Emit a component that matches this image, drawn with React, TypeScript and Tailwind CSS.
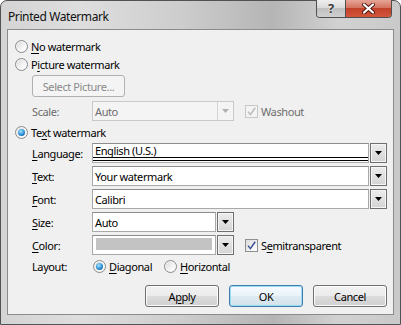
import React from 'react';

function Radio({ checked }: { checked?: boolean }) {
  return (
    <span className="flex h-[13px] w-[13px] shrink-0 items-center justify-center rounded-full border border-[#8a8b8c] bg-[linear-gradient(135deg,#d6d6d6,#fbfbfb_70%)] shadow-[inset_0_0_0_1px_#f6f6f6]">
      {checked && (
        <span className="h-[7px] w-[7px] rounded-full bg-[radial-gradient(circle_at_40%_35%,#a6e2ff,#2a8fd4_55%,#0d4a82)]" />
      )}
    </span>
  );
}

function Check({ disabled }: { disabled?: boolean }) {
  return (
    <span
      className={`flex h-[13px] w-[13px] shrink-0 items-center justify-center border ${
        disabled ? 'border-[#c7c7c7] bg-[#f4f4f4]' : 'border-[#8e8f8f] bg-[linear-gradient(135deg,#dcdcdc,#ffffff)]'
      }`}
    >
      <svg width="9" height="9" viewBox="0 0 9 9">
        <path
          d="M1 4.6 L3.4 7.6 L8.2 0.8"
          fill="none"
          stroke={disabled ? '#b9b9b9' : '#3a4f95'}
          strokeWidth="1.5"
        />
      </svg>
    </span>
  );
}

function Arrow({ disabled }: { disabled?: boolean }) {
  return (
    <svg width="7" height="4" viewBox="0 0 7 4">
      <path d="M0 0 H7 L3.5 4 Z" fill={disabled ? '#b0b0b0' : '#000'} />
    </svg>
  );
}

function Combo({
  value,
  wide,
  underline,
  swatch,
}: {
  value?: string;
  wide?: boolean;
  underline?: boolean;
  swatch?: boolean;
}) {
  return (
    <div className={`flex h-[20px] ${wide ? 'w-[295px]' : 'w-[142px]'}`}>
      <div className="flex flex-1 flex-col border border-[#a9a9a9] border-t-[#8d8d8d] bg-white">
        {swatch ? (
          <div className="mx-[3px] mt-[2px] h-[12px] bg-[#c3c3c3]" />
        ) : (
          <div className="flex flex-1 items-center pl-[2px] text-black">{value}</div>
        )}
        {underline && <div className="mb-[1px] h-[4px] border-y border-black" />}
      </div>
      <div className="ml-[1px] flex w-[17px] items-center justify-center border border-[#6f6f6f] bg-[linear-gradient(#ececec,#d4d4d4)] shadow-[inset_0_0_0_1px_#f5f5f5]">
        <Arrow />
      </div>
    </div>
  );
}

function U({ children }: { children: React.ReactNode }) {
  return <span className="underline underline-offset-[2px]">{children}</span>;
}

function Btn({ children, def }: { children: React.ReactNode; def?: boolean }) {
  return (
    <div
      className={`flex h-[22px] w-[74px] items-center justify-center rounded-[3px] border text-black ${
        def
          ? 'border-[#3c7fb1] bg-[linear-gradient(#f6fbfe,#eaf3f9_50%,#dfeaf1_50%,#d3e2eb)] shadow-[inset_0_0_0_1px_#9fdaf5]'
          : 'border-[#707070] bg-[linear-gradient(#f2f2f2,#ebebeb_50%,#dddddd_50%,#cfcfcf)] shadow-[inset_0_0_0_1px_#fbfbfb]'
      }`}
    >
      {children}
    </div>
  );
}

export default function App() {
  return (
    <div className="flex h-[325px] w-[401px] flex-col rounded-t-[7px] border border-[#505356] bg-[linear-gradient(90deg,#d4d4d4,#dedede_20%,#cdcdcd_45%,#b5b5b5_68%,#d2d2d2_85%,#c9c9c9)] px-[6px] pb-[9px] font-['Noto_Sans',sans-serif] text-[11px] leading-none tracking-[-0.4px]">
      {/* title bar */}
      <div className="flex h-[28px] items-start">
        <div className="mt-[10px] pl-[1px] text-[12px] text-[#111]">Printed Watermark</div>
        <div className="-mt-[1px] mr-[2px] ml-auto flex h-[18px] overflow-hidden rounded-b-[4px] border border-t-0 border-[#4f4f4f]">
          <div className="flex w-[29px] items-center justify-center border-r border-[#4f4f4f] bg-[linear-gradient(#eeeeee,#dadada_45%,#bfbfbf_50%,#cfcfcf)] text-[13px] font-bold text-[#3d3d3d] [text-shadow:0_0_2px_#fff]">
            ?
          </div>
          <div className="flex w-[45px] items-center justify-center bg-[linear-gradient(#e6a597,#d47460_45%,#c2412b_50%,#d4553a)]">
            <svg width="13" height="11" viewBox="0 0 13 11">
              <path d="M2 1.5 L11 9.5 M11 1.5 L2 9.5" stroke="#4a1810" strokeWidth="4" strokeLinecap="round" />
              <path d="M2 1.5 L11 9.5 M11 1.5 L2 9.5" stroke="#ffffff" strokeWidth="2.2" strokeLinecap="round" />
            </svg>
          </div>
        </div>
      </div>

      {/* client */}
      <div className="flex flex-1 flex-col border border-[#8b8b8b] bg-[#f0f0f0] pr-[6px] text-black">
        <div className="mt-[7px] flex h-[18px] items-center gap-[3px] pl-[7px]">
          <Radio />
          <span>
            <U>N</U>o watermark
          </span>
        </div>
        <div className="flex h-[18px] items-center gap-[3px] pl-[7px]">
          <Radio />
          <span>
            P<U>i</U>cture watermark
          </span>
        </div>
        <div className="mt-[2px] pl-[24px]">
          <div className="flex h-[22px] w-[93px] items-center justify-center rounded-[3px] border border-[#adb2b5] bg-[#f4f4f4] text-[#8a8a8a]">
            Select Picture...
          </div>
        </div>
        <div className="mt-[4px] flex h-[20px] items-center pl-[24px] text-[#6d6d6d]">
          <span className="w-[60px]">Scale:</span>
          <div className="flex h-[20px] w-[142px] border border-[#c9c9c9] bg-[#f4f4f4]">
            <div className="flex flex-1 items-center pl-[2px]">Auto</div>
            <div className="flex w-[16px] items-center justify-center border-l border-[#d4d4d4]">
              <Arrow disabled />
            </div>
          </div>
          <div className="ml-[11px] flex items-center gap-[3px]">
            <Check disabled />
            <span>Washout</span>
          </div>
        </div>
        <div className="mt-[2px] flex h-[18px] items-center gap-[3px] pl-[7px]">
          <Radio checked />
          <span>
            Te<U>x</U>t watermark
          </span>
        </div>
        <div className="mt-[2px] flex items-center pl-[24px]">
          <span className="w-[60px]">
            <U>L</U>anguage:
          </span>
          <Combo value="English (U.S.)" wide underline />
        </div>
        <div className="mt-[3px] flex items-center pl-[24px]">
          <span className="w-[60px]">
            <U>T</U>ext:
          </span>
          <Combo value="Your watermark" wide />
        </div>
        <div className="mt-[3px] flex items-center pl-[24px]">
          <span className="w-[60px]">
            <U>F</U>ont:
          </span>
          <Combo value="Calibri" wide />
        </div>
        <div className="mt-[3px] flex items-center pl-[24px]">
          <span className="w-[60px]">
            <U>S</U>ize:
          </span>
          <Combo value="Auto" />
        </div>
        <div className="mt-[3px] flex items-center pl-[24px]">
          <span className="w-[60px]">
            <U>C</U>olor:
          </span>
          <Combo swatch />
          <div className="ml-[11px] flex items-center gap-[3px]">
            <Check />
            <span>
              S<U>e</U>mitransparent
            </span>
          </div>
        </div>
        <div className="mt-[2px] flex h-[18px] items-center pl-[24px]">
          <span className="w-[61px]">Layout:</span>
          <div className="flex items-center gap-[3px]">
            <Radio checked />
            <span>
              <U>D</U>iagonal
            </span>
          </div>
          <div className="ml-[12px] flex items-center gap-[3px]">
            <Radio />
            <span>
              <U>H</U>orizontal
            </span>
          </div>
        </div>
        <div className="mt-[10px] flex justify-end gap-[10px]">
          <Btn>
            A<U>p</U>ply
          </Btn>
          <Btn def>OK</Btn>
          <Btn>Cancel</Btn>
        </div>
      </div>
    </div>
  );
}
